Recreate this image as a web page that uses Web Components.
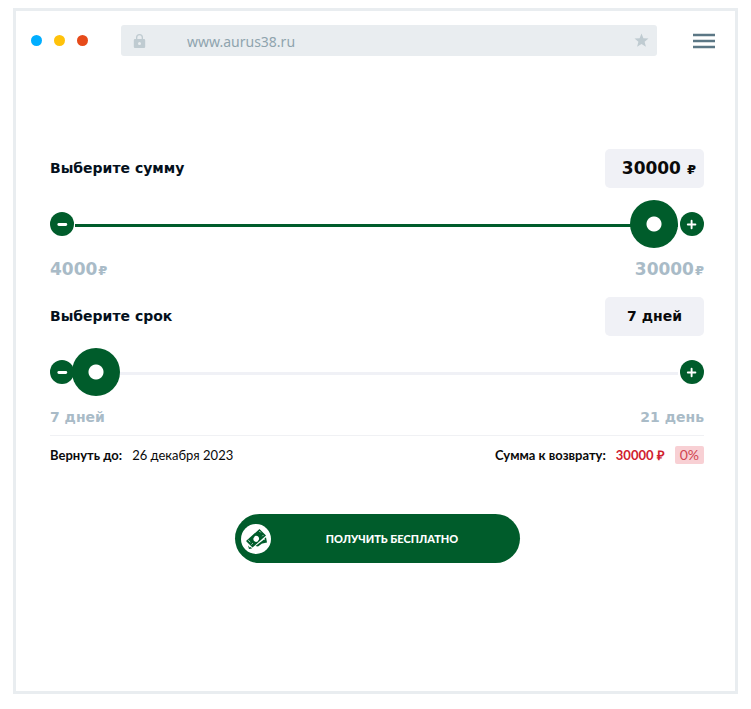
<!DOCTYPE html>
<html lang="ru">
<head>
<meta charset="utf-8">
<meta name="viewport" content="width=device-width, initial-scale=1">
<title>Займ</title>
<style>
body { margin: 0; padding: 8px 0 15px; background: #fff; color: #0a0a0a; font-family: "DejaVu Sans", sans-serif; }
</style>
</head>
<body>
<browser-frame url="www.aurus38.ru">
  <loan-calculator>
    <range-field label="Выберите сумму" min="4000" max="30000" step="1000" value="30000" min-label="4000" max-label="30000" currency></range-field>
    <range-field label="Выберите срок" min="7" max="21" step="1" value="7" min-label="7 дней" max-label="21 день"></range-field>
    <loan-summary slot="summary" date="26 декабря 2023" total="30000 ₽" rate="0%"></loan-summary>
    <cta-button slot="action">Получить бесплатно</cta-button>
  </loan-calculator>
</browser-frame>

<script>
class BrowserFrame extends HTMLElement {
  connectedCallback() {
    this.attachShadow({ mode: "open" }).innerHTML = `
      <style>
        :host { display: block; box-sizing: border-box; margin: 0 13px; border: 3px solid #e9edf0; min-height: calc(100vh - 23px); }
        header { display: flex; align-items: center; padding: 14px 20px 0 15px; }
        .dots { display: flex; gap: 12px; margin-right: 33px; }
        .dots i { width: 11px; height: 11px; border-radius: 50%; background: #00aeff; }
        .dots i:nth-child(2) { background: #ffc20a; }
        .dots i:nth-child(3) { background: #e64a19; }
        .bar { flex: 1; display: flex; align-items: center; height: 31px; box-sizing: border-box; padding: 0 8px 0 12px; border-radius: 3px; background: #e9edf0; min-width: 0; }
        .bar svg { flex: none; fill: #bfcbd1; }
        input { flex: 1; min-width: 0; margin: 0 0 0 41px; padding: 2px 0 0; border: 0; background: none; outline: 0; color: #8fa4ae; font: 14px/20px "Noto Sans", sans-serif; }
        button { flex: none; display: block; margin-left: 36px; padding: 0; border: 0; background: none; }
        button svg { display: block; }
      </style>
      <header>
        <div class="dots"><i></i><i></i><i></i></div>
        <div class="bar">
          <svg width="13" height="16" viewBox="0 0 13 16"><path fill-rule="evenodd" d="M3 6V4.500a3.500 3.500 0 0 1 7 0V6h1a1.200 1.200 0 0 1 1.200 1.200v6.600A1.200 1.200 0 0 1 11 15H2a1.200 1.200 0 0 1-1.200-1.200V7.200A1.200 1.200 0 0 1 2 6zM4.300 6h4.400V4.500a2.200 2.200 0 0 0-4.400 0zM6.500 9a1.500 1.500 0 1 0 0 3a1.500 1.500 0 0 0 0-3z"/></svg>
          <input type="text" aria-label="Адрес" value="${this.getAttribute("url")}">
          <svg width="15" height="16" viewBox="0 0 15 16"><path d="M7.500 .5l1.900 4.700 5.100.4-3.900 3.200 1.300 5-4.400-2.700L3.100 13.800l1.300-5L.5 5.600l5.100-.4z"/></svg>
        </div>
        <button type="button" aria-label="Меню"><svg width="22" height="16" viewBox="0 0 22 16"><path d="M0 2h22M0 8h22M0 14h22" stroke="#5b7785" stroke-width="2.500"/></svg></button>
      </header>
      <slot></slot>`;
  }
}

class LoanCalculator extends HTMLElement {
  connectedCallback() {
    this.attachShadow({ mode: "open" }).innerHTML = `
      <style>
        :host { display: block; padding: 93px 31px 40px 34px; }
        .fields { display: grid; gap: 18px; }
        .summary { margin-top: 8px; }
        .action { display: flex; justify-content: center; margin-top: 50px; }
      </style>
      <div class="fields"><slot></slot></div>
      <div class="summary"><slot name="summary"></slot></div>
      <div class="action"><slot name="action"></slot></div>`;
  }
}

class RangeField extends HTMLElement {
  connectedCallback() {
    const at = (n) => this.getAttribute(n);
    const money = this.hasAttribute("currency");
    const sign = money ? `<small>₽</small>` : "";
    this.attachShadow({ mode: "open" }).innerHTML = `
      <style>
        :host { display: block; font-weight: 700; --green: #005c2b; }
        .top, .limits { display: flex; justify-content: space-between; }
        label { font-size: 14px; line-height: 38px; color: #04101c; }
        output { display: flex; align-items: baseline; justify-content: center; box-sizing: border-box; height: 39px; min-width: 99px; padding: 0 8px; border-radius: 5px; background: #f0f1f6; font-size: 14px; line-height: 38px; }
        output.money { justify-content: flex-end; gap: 6px; font-size: 17px; }
        small { font-size: 13px; }
        .slider { display: flex; align-items: center; margin-top: 12px; }
        button { flex: none; display: block; width: 24px; height: 24px; padding: 0; border: 0; border-radius: 50%; background: var(--green); }
        button svg { display: block; }
        input { -webkit-appearance: none; appearance: none; flex: 1; min-width: 0; height: 48px; margin: 0 2px 0 -2px; outline: 0; position: relative;
          background: linear-gradient(to right, var(--green) var(--fill), #f0f1f6 var(--fill)) 3px 24px / 100% 3px no-repeat; }
        input::-webkit-slider-runnable-track { height: 48px; }
        input::-webkit-slider-thumb { -webkit-appearance: none; width: 48px; height: 48px; border-radius: 50%; background: radial-gradient(circle, #fff 7px, var(--green) 8px); }
        .limits { height: 20px; margin-top: 11px; color: #a9bbc7; font-size: 14px; line-height: 20px; }
        .money.limits { font-size: 17px; }
        .limits small { margin-left: 1px; }
      </style>
      <div class="top"><label for="r">${at("label")}</label><output for="r" class="${money ? "money" : ""}"></output></div>
      <div class="slider">
        <button type="button" aria-label="Меньше"><svg width="24" height="24"><path d="M8.800 12.500h7" stroke="#fff" stroke-width="2.800" stroke-linecap="round"/></svg></button>
        <input id="r" type="range" min="${at("min")}" max="${at("max")}" step="${at("step")}" value="${at("value")}">
        <button type="button" aria-label="Больше"><svg width="24" height="24"><path d="M7.800 12.500h7.600M11.600 8.700v7.600" stroke="#fff" stroke-width="1.900" stroke-linecap="round"/></svg></button>
      </div>
      <div class="limits ${money ? "money" : ""}"><span>${at("min-label")}${sign}</span><span>${at("max-label")}${sign}</span></div>`;
    const input = this.shadowRoot.querySelector("input");
    const output = this.shadowRoot.querySelector("output");
    const [less, more] = this.shadowRoot.querySelectorAll("button");
    const days = (n) => n === 21 ? "день" : "дней";
    const update = () => {
      const n = Number(input.value);
      input.style.setProperty("--fill", (n - input.min) / (input.max - input.min) * 100 + "%");
      output.innerHTML = money ? `<span>${n}</span><small>₽</small>` : `${n} ${days(n)}`;
    };
    input.addEventListener("input", update);
    less.addEventListener("click", () => { input.stepDown(); update(); });
    more.addEventListener("click", () => { input.stepUp(); update(); });
    update();
  }
}

class LoanSummary extends HTMLElement {
  connectedCallback() {
    const at = (n) => this.getAttribute(n);
    this.attachShadow({ mode: "open" }).innerHTML = `
      <style>
        :host { display: flex; flex-wrap: wrap; justify-content: space-between; gap: 8px; padding-top: 10px; border-top: 1px solid #f0f1f4; font: 13px/18px Lato, sans-serif; }
        div { display: flex; gap: 10px; }
        .total { color: #d0202e; }
        mark { padding: 0 5px; border-radius: 2px; background: #f8d0d4; color: #d0454f; font-size: 14px; }
      </style>
      <div><b>Вернуть до:</b><span>${at("date")}</span></div>
      <div><b>Сумма к возврату:</b><b class="total">${at("total")}</b><mark>${at("rate")}</mark></div>`;
  }
}

class CtaButton extends HTMLElement {
  connectedCallback() {
    this.attachShadow({ mode: "open" }).innerHTML = `
      <style>
        :host { display: block; flex: 0 1 285px; }
        button { display: flex; align-items: center; width: 100%; height: 49px; padding: 0 30px 0 6px; border: 0; border-radius: 25px; background: #005c2b; color: #fff; font: 900 11px/18px Lato, sans-serif; text-transform: uppercase; }
        svg { flex: none; display: block; }
        span { flex: 1; padding-left: 24px; text-align: center; }
      </style>
      <button type="button">
        <svg width="30" height="30" viewBox="0 0 30 30">
          <circle cx="15" cy="15" r="15" fill="#fff"/>
          <g fill="#005c2b">
            <path fill-rule="evenodd" d="M5 17L18.500 5L25 11.500L11.500 23.500zM13.200 13.200a2.300 2.700-40 1 0 4 3.200a2.300 2.700-40 1 0-4-3.200z"/>
            <path d="M25 13.200L26 18.500L17 20.500L18.500 19L24 17.500L23.500 14.500zM14.500 22L23 15.500L24.500 17L17 22.500z"/>
            <path d="M7 21.500l1 3.500 3-.6-1.200-1.500-1 .6z"/>
          </g>
          <path d="M7.300 16.200l2 1.900M18.300 7l1.400 1.400M22.300 11.200l-1 1M10.500 20.500l1.300-1.200" stroke="#fff" stroke-width=".8"/>
        </svg>
        <span><slot></slot></span>
      </button>`;
  }
}

customElements.define("browser-frame", BrowserFrame);
customElements.define("loan-calculator", LoanCalculator);
customElements.define("range-field", RangeField);
customElements.define("loan-summary", LoanSummary);
customElements.define("cta-button", CtaButton);
</script>
</body>
</html>
